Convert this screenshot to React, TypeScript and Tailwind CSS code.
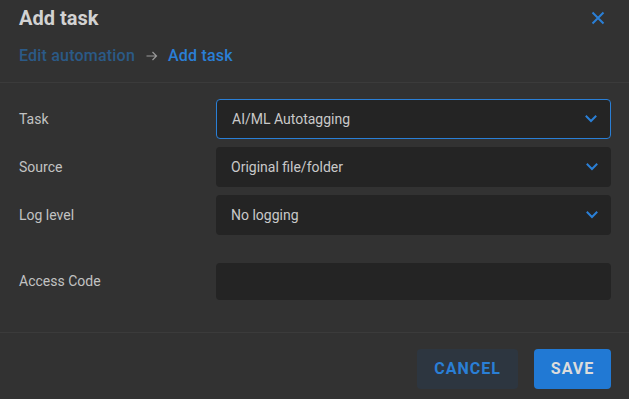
import React from "react";

const Chevron = () => (
  <svg width="12" height="8" viewBox="0 0 12 8" fill="none" className="shrink-0">
    <path d="M1.5 1.5 L6 6 L10.5 1.5" stroke="#2a7fd6" strokeWidth="2" strokeLinecap="square" />
  </svg>
);

const Select = ({ value, active }: { value: string; active?: boolean }) => (
  <div
    className={`flex h-10 w-[395px] items-center justify-between rounded-[4px] bg-[#242424] pl-[15px] pr-[13px] ${
      active ? "border border-[#2a7fd6] pl-[14px] pr-[12px]" : ""
    }`}
  >
    <span className="text-[14px] text-[#c9c9c9]">{value}</span>
    <Chevron />
  </div>
);

export default function App() {
  return (
    <div
      className="flex h-[399px] w-[629px] flex-col bg-[#323232]"
      style={{ fontFamily: "Roboto, 'Noto Sans', sans-serif" }}
    >
      <div className="border-b border-[#3b3b3b] px-[19px] pt-[4px] pb-[14px]">
        <div className="flex h-7 items-center justify-between">
          <span className="text-[20px] font-bold text-[#d2d2d2]">Add task</span>
          <svg width="14" height="14" viewBox="0 0 14 14" className="mr-[5px]">
            <path d="M1.5 1.5 L12.5 12.5 M12.5 1.5 L1.5 12.5" stroke="#2a7fd6" strokeWidth="2" />
          </svg>
        </div>
        <div className="mt-[12px] flex h-6 items-center text-[16px] font-medium tracking-[0.2px]">
          <span className="text-[#2b5a87]">Edit automation</span>
          <svg width="12" height="10" viewBox="0 0 12 10" className="ml-[11px] mr-[10px]">
            <path d="M0.5 5 H10.5 M6.5 1 L10.5 5 L6.5 9" stroke="#9a9a9a" strokeWidth="1.2" fill="none" />
          </svg>
          <span className="text-[#2a7fd6]">Add task</span>
        </div>
      </div>

      <div className="flex flex-col gap-2 border-b border-[#3b3b3b] pl-[19px] pr-[18px] pt-[16px] pb-[32px]">
        <div className="flex items-center justify-between">
          <span className="text-[14px] text-[#c2c2c2]">Task</span>
          <Select value="AI/ML Autotagging" active />
        </div>
        <div className="flex items-center justify-between">
          <span className="text-[14px] text-[#c2c2c2]">Source</span>
          <Select value="Original file/folder" />
        </div>
        <div className="flex items-center justify-between">
          <span className="text-[14px] text-[#c2c2c2]">Log level</span>
          <Select value="No logging" />
        </div>
        <div className="mt-[20px] flex items-center justify-between">
          <span className="text-[14px] text-[#c2c2c2]">Access Code</span>
          <div className="h-[37px] w-[395px] rounded-[4px] bg-[#242424]" />
        </div>
      </div>

      <div className="flex justify-end gap-4 pr-[18px] pt-[16px]">
        <button className="flex h-10 w-[101px] items-center justify-center rounded-[4px] bg-[#2d3640] text-[16px] font-bold tracking-[1px] text-[#2a7fd6]">
          CANCEL
        </button>
        <button className="flex h-10 w-[77px] items-center justify-center rounded-[4px] bg-[#2179d4] text-[16px] font-bold tracking-[1px] text-[#dcdcdc]">
          SAVE
        </button>
      </div>
    </div>
  );
}
